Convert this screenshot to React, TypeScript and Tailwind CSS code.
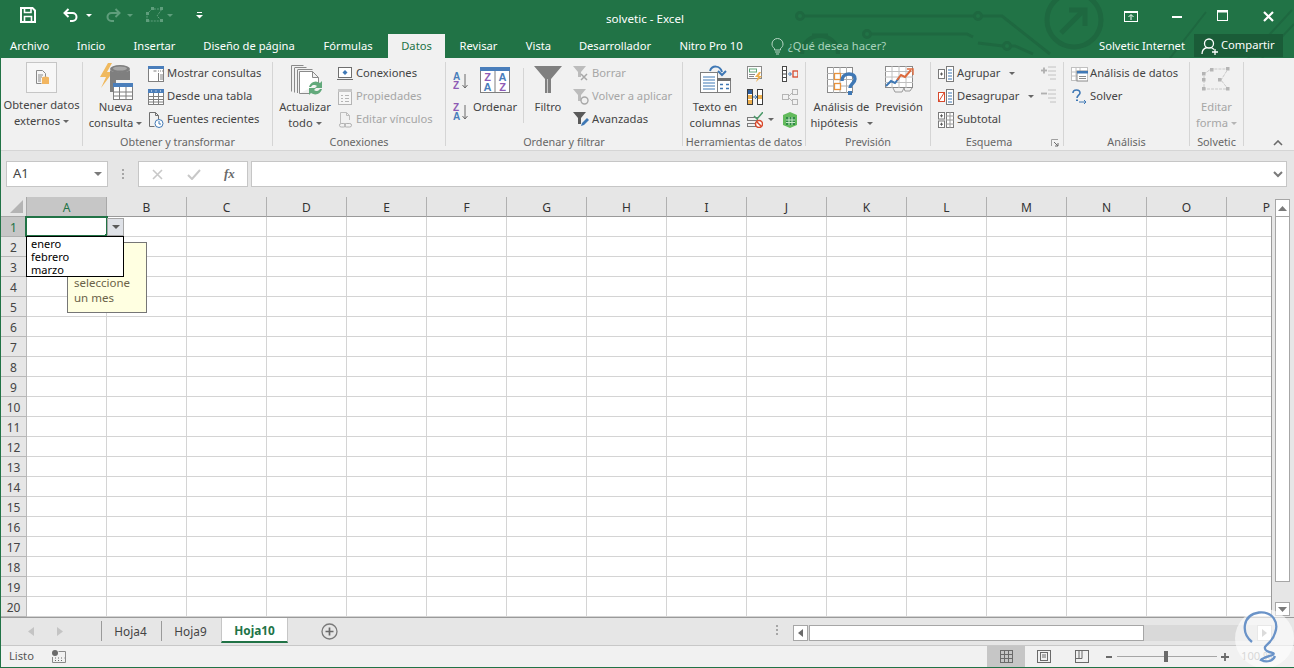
import React from "react";

const Caret = ({ c = "#666" }: { c?: string }) => (
  <svg width="6" height="3" viewBox="0 0 6 3" className="inline-block shrink-0"><path d="M0 0h6L3 3z" fill={c} /></svg>
);
const Caret8 = ({ c = "#666" }: { c?: string }) => (
  <svg width="8" height="4" viewBox="0 0 8 4" className="inline-block shrink-0"><path d="M0 0h8L4 4z" fill={c} /></svg>
);

const Grp = ({ w, label, children, extra }: { w: string; label?: string; children: React.ReactNode; extra?: React.ReactNode }) => (
  <div className={`relative flex flex-col h-[84px] shrink-0 border-r border-[#d5d5d5] ${w}`}>
    <div className="flex h-[72px]">{children}</div>
    {label && <div className="h-[12px] leading-[16px] text-[10.8px] text-center text-[#666] whitespace-nowrap">{label}</div>}
    {extra}
  </div>
);

const Big = ({ w, ml, icon, lines, ih = "h-[37px]", grey }: { w: string; ml?: string; icon: React.ReactNode; lines: React.ReactNode[]; ih?: string; grey?: boolean }) => (
  <div className={`flex flex-col items-center shrink-0 ${w} ${ml || ""} ${grey ? "text-[#a6a6a6]" : "text-[#444]"}`}>
    <div className={`flex items-center justify-center ${ih}`}>{icon}</div>
    {lines.map((l, i) => (
      <div key={i} className="leading-[16px] whitespace-nowrap flex items-center gap-[3px]">{l}</div>
    ))}
  </div>
);

const Small = ({ icon, text, grey, caret }: { icon: React.ReactNode; text: string; grey?: boolean; caret?: string }) => (
  <div className={`flex items-center h-[23px] gap-[3px] whitespace-nowrap ${grey ? "text-[#a6a6a6]" : "text-[#444]"}`}>
    <span className="w-[16px] h-[16px] flex items-center justify-center shrink-0">{icon}</span>
    <span>{text}</span>
    {caret && <span className={`flex ${caret}`}><Caret /></span>}
  </div>
);

const S = ({ children, w = 16, h = 16 }: { children: React.ReactNode; w?: number; h?: number }) => (
  <svg width={w} height={h} viewBox={`0 0 ${w} ${h}`} className="shrink-0" fill="none">{children}</svg>
);

const IDocDb = () => (
  <S>
    <path d="M2.5 1.5h6l3 3v4M2.5 1.5v13h5" stroke="#8a8a8a" />
    <path d="M4 6h5M4 8h4M4 10h3M4 12h3" stroke="#8a8a8a" />
    <ellipse cx="11.5" cy="9" rx="3.5" ry="1.5" fill="#f2b661" />
    <rect x="8" y="9" width="7" height="6" fill="#f2b661" />
  </S>
);
const INueva = () => (
  <S w={34} h={37}>
    <path d="M9 0L1 14h6L2 25 14 9H8l5-9z" fill="#f0b95e" />
    <ellipse cx="21" cy="6" rx="10" ry="4" fill="#7f7f7f" />
    <path d="M11 7v22h6V17h14V7c-2 3-18 3-20 0z" fill="#7f7f7f" />
    <ellipse cx="21" cy="5.5" rx="7" ry="2" fill="#a8a8a8" />
    <rect x="14.5" y="20.5" width="19" height="16" fill="#fff" stroke="#7f7f7f" />
    <rect x="14" y="20" width="20" height="4" fill="#4a7ebb" />
    <path d="M14 29h20M14 33h20M20.5 24v12M27 24v12" stroke="#7f7f7f" />
  </S>
);
const IMostrar = () => (
  <S>
    <rect x=".5" y=".5" width="15" height="15" fill="#fff" stroke="#7f7f7f" />
    <rect x="0" y="0" width="16" height="3" fill="#4a7ebb" />
    <path d="M5.5 5h3M10 5h1M12 5h1M14 5h1" stroke="#7f7f7f" />
    <path d="M10.5 7v8M12 9h3M12 11h3M12 13h3" stroke="#7f7f7f" />
  </S>
);
const ITabla = () => (
  <S>
    <rect x=".5" y=".5" width="15" height="15" fill="#fff" stroke="#7f7f7f" />
    <rect x="0" y="0" width="16" height="4" fill="#4a7ebb" />
    <path d="M3 2h1M7.5 2h1M12 2h1" stroke="#fff" />
    <path d="M0 7.5h16M0 10.5h16M0 13h16M5.5 4v12M10.5 4v12" stroke="#7f7f7f" />
  </S>
);
const IRecientes = () => (
  <S>
    <path d="M1.5 14.5v-14h6l3 3v4M1.5 14.5h5M7.5.5v3h3" stroke="#6f6f6f" />
    <circle cx="11" cy="11.5" r="4" fill="#fff" stroke="#3f78b5" />
    <path d="M11 9v3h2" stroke="#3f78b5" />
  </S>
);
const IConex = () => (
  <S>
    <rect x="1.5" y="1.5" width="13" height="10" fill="#fff" stroke="#6f6f6f" />
    <path d="M0 13.5h16" stroke="#6f6f6f" />
    <path d="M8 4l2.5 2.5L8 9 5.5 6.5z" fill="#3f78b5" />
  </S>
);
const IProp = () => (
  <S>
    <rect x="1.5" y=".5" width="13" height="15" fill="#f6f6f6" stroke="#b5b5b5" />
    <rect x="1" y="0" width="14" height="3" fill="#c8c8c8" />
    <path d="M4 6.5h2M8 6.5h4M4 9.5h2M8 9.5h4M4 12.5h2M8 12.5h4" stroke="#b5b5b5" />
  </S>
);
const IVinc = () => (
  <S>
    <path d="M3.5 11V.5h6l3 3V8M9.5.5v3h3" stroke="#bdbdbd" />
    <rect x="2.5" y="11.5" width="6" height="3.5" rx="1.7" stroke="#b0b0b0" />
    <rect x="7.5" y="11.5" width="7" height="3.5" rx="1.7" stroke="#b0b0b0" />
  </S>
);
const IActual = () => (
  <S w={32} h={32}>
    <path d="M.5 26.5V.5M3.5 27.5V3M6.5 28V5" stroke="#8a8a8a" />
    <path d="M.5.5h12M3.5 2.5h12M6.5 4.5h15" stroke="#8a8a8a" />
    <path d="M8.5 28.5V6.5h13l6 6v6M21.5 6.5v6h6M8.5 28.5h10" stroke="#8a8a8a" fill="#fff" />
    <path d="M18 22a7 7 0 0 1 11-4l2-2v7h-7l2-2a4 4 0 0 0-6 1z" fill="#62a97b" />
    <path d="M31 24a7 7 0 0 1-11 4l-2 2v-7h7l-2 2a4 4 0 0 0 6-1z" fill="#62a97b" />
  </S>
);
const Sort = ({ top, bottom, c1, c2 }: { top: string; bottom: string; c1: string; c2: string }) => (
  <svg width="16" height="19" viewBox="0 0 16 19" className="shrink-0">
    <text x="0" y="8.5" fontSize="10" fontWeight="700" fontFamily="Liberation Sans" fill={c1}>{top}</text>
    <text x="0" y="17.5" fontSize="10" fontWeight="700" fontFamily="Liberation Sans" fill={c2}>{bottom}</text>
    <path d="M12 3v14M9.5 14l2.5 3 2.5-3" stroke="#6a6a6a" fill="none" />
  </svg>
);
const IOrdenar = () => (
  <svg width="30" height="26" viewBox="0 0 30 26" className="shrink-0">
    <rect x=".5" y=".5" width="29" height="25" fill="#fff" stroke="#7f7f7f" />
    <rect width="30" height="4" fill="#4a7ebb" />
    <path d="M15 4v22" stroke="#7f7f7f" />
    <g fontSize="11" fontWeight="700" fontFamily="Liberation Sans" textAnchor="middle">
      <text x="7.5" y="14" fill="#8e5bb5">Z</text>
      <text x="7.5" y="24" fill="#4a7ebb">A</text>
      <text x="22.5" y="14" fill="#4a7ebb">A</text>
      <text x="22.5" y="24" fill="#8e5bb5">Z</text>
    </g>
  </svg>
);
const IFiltro = () => (
  <S w={28} h={27}>
    <path d="M0 0h28L17 13v14h-6V13z" fill="#808080" />
    <path d="M13.5 13v14" stroke="#c9c9c9" />
  </S>
);
const IBorrar = () => (
  <S>
    <path d="M0 0h13L8 6v5H5V6z" fill="#bcbcbc" />
    <path d="M8 8l6 6M14 8l-6 6" stroke="#a8a8a8" strokeWidth="1.5" />
  </S>
);
const IVolver = () => (
  <S>
    <path d="M0 0h13L8 6v6H5V6z" fill="#bcbcbc" />
    <circle cx="11.5" cy="11.5" r="3.5" stroke="#a8a8a8" strokeWidth="1.4" />
  </S>
);
const IAvanz = () => (
  <S>
    <path d="M0 0h13L8 6v6H5V6z" fill="#5a5a5a" />
    <path d="M8 14l1-3 5-5 2 2-5 5z" fill="#3f78b5" />
  </S>
);
const ITexto = () => (
  <S w={31} h={28}>
    <rect x=".5" y="7.5" width="17" height="20" fill="#fff" stroke="#7f7f7f" />
    <path d="M3 12h12M3 15h12M3 18h12M3 21h12M3 24h12" stroke="#3f78b5" />
    <rect x="17.5" y="13.5" width="13" height="14" fill="#fff" stroke="#7f7f7f" />
    <rect x="17" y="13" width="14" height="3" fill="#6f6f6f" />
    <path d="M20 19.5h3M26 19.5h3M20 23.5h3M26 23.5h3" stroke="#3f78b5" strokeWidth="1.5" />
    <path d="M10 6C12 0 20 0 22 7" stroke="#3f78b5" strokeWidth="2" />
    <path d="M18 6l4 4 4-4" stroke="#3f78b5" strokeWidth="2" />
  </S>
);
const IFlash = () => (
  <S>
    <rect x=".5" y=".5" width="14" height="12" fill="#fff" stroke="#8a8a8a" />
    <rect x="2.5" y="3" width="7" height="3" stroke="#62a97b" />
    <path d="M2 8.5h6M2 10.5h5" stroke="#8a8a8a" />
    <path d="M12 6l-4 5h3l-2 5 6-6h-3l2-4z" fill="#eeb04f" />
  </S>
);
const IDup = () => (
  <S>
    <rect x=".5" y=".5" width="5" height="15" fill="#fff" stroke="#3e3e3e" />
    <rect x="10.5" y=".5" width="5" height="15" fill="#fff" stroke="#3e3e3e" />
    <rect x="1" y="1" width="4" height="4" fill="#2f5f9e" />
    <rect x="1" y="6" width="4" height="4" fill="#eeb04f" />
    <rect x="1" y="11" width="4" height="4" fill="#eeb04f" />
    <rect x="11" y="6" width="4" height="4" fill="#eeb04f" />
    <path d="M6 8h4M8 6l2 2-2 2" stroke="#3f78b5" />
  </S>
);
const IValid = () => (
  <S>
    <rect x=".5" y="5.5" width="10" height="3" stroke="#7a7a7a" />
    <rect x=".5" y="11.5" width="8" height="3" stroke="#7a7a7a" />
    <path d="M7 4l3 3 6-7" stroke="#4c9a6a" strokeWidth="1.5" />
    <circle cx="12" cy="12" r="3.5" fill="#fff" stroke="#d8492c" strokeWidth="1.5" />
    <path d="M9.5 9.5l5 5" stroke="#d8492c" strokeWidth="1.5" />
  </S>
);
const IConsol = () => (
  <S>
    <rect x=".5" y=".5" width="4" height="15" fill="#fff" stroke="#4a4a4a" />
    <path d="M1 4.5h3M1 8h3M1 11.5h3" stroke="#4a4a4a" />
    <path d="M6 8h3M7.5 6l2 2-2 2" stroke="#3f78b5" />
    <rect x="11" y="5" width="5" height="6" stroke="#d8492c" strokeWidth="1.3" />
  </S>
);
const IRel = () => (
  <S>
    <rect x=".5" y="5.5" width="6" height="5" stroke="#b5b5b5" />
    <rect x="10.5" y=".5" width="5" height="5" stroke="#b5b5b5" />
    <rect x="10.5" y="10.5" width="5" height="5" stroke="#b5b5b5" />
    <path d="M7 7l3-3M7 9l3 3" stroke="#b5b5b5" />
  </S>
);
const IModel = () => (
  <S>
    <path d="M1 3l7-3 7 3v10l-7 3-7-3z" fill="#63bb5c" />
    <path d="M4 5h9v8H4z" fill="#2e8b45" />
    <path d="M4 8h9M4 10.500h9M7 5v8M10 5v8" stroke="#c9e9c9" />
  </S>
);
const IHipo = () => (
  <S w={30} h={30}>
    <rect x=".5" y=".5" width="25" height="25" fill="#fff" stroke="#8a8a8a" />
    <path d="M0 6.5h26M0 12.5h26M0 19h26M6.5 0v26M13 0v26M19.5 0v26" stroke="#b0b0b0" />
    <rect x="7.5" y="6.5" width="6" height="6" fill="#fff" stroke="#e8923a" strokeWidth="1.3" />
    <rect x="7.5" y="16.5" width="6" height="6" fill="#fff" stroke="#e8923a" strokeWidth="1.3" />
    <path d="M15 14c0-5 4-7 7-7 4 0 6 2 6 5 0 4-5 5-5 9" stroke="#3f78b5" strokeWidth="3.4" fill="none" />
    <rect x="21" y="24" width="4" height="4" fill="#3f78b5" />
  </S>
);
const IPrev = () => (
  <S w={29} h={27}>
    <rect x=".5" y=".5" width="27" height="21" fill="#fff" stroke="#8a8a8a" />
    <path d="M0 5.5h28M0 11h28M0 16.5h28M7 0v22M14 0v22M21 0v22" stroke="#c0c0c0" />
    <path d="M1 20l5-5 4 2 4-5" stroke="#3f78b5" strokeWidth="2" />
    <path d="M12 14l4-5 4 2 6-7" stroke="#dd6a3c" strokeWidth="2" />
    <path d="M22 3h6v6" stroke="#dd6a3c" strokeWidth="1.4" />
    <path d="M8 22l2 4h7l2-4M19 22l1 3h5l2-3" stroke="#9a9a9a" />
  </S>
);
const IAgr = ({ red }: { red?: boolean }) => (
  <S>
    <rect x=".5" y="3.5" width="6" height="9" fill="#fff" stroke={red ? "#d8492c" : "#7a7a7a"} />
    {red ? <path d="M1 12l5-8" stroke="#d8492c" /> : <path d="M2 8h3M3.5 6.5v3" stroke="#5a5a5a" />}
    <rect x="8.5" y=".5" width="7" height="15" fill="#fff" stroke="#7a7a7a" />
    <path d="M10 4h4M10 7h4M10 10h4M10 13h4" stroke="#3f78b5" />
  </S>
);
const ISub = () => (
  <S>
    <rect x=".5" y=".5" width="6" height="6.5" fill="#fff" stroke="#7a7a7a" />
    <rect x=".5" y="9" width="6" height="6.5" fill="#fff" stroke="#7a7a7a" />
    <path d="M2 3.8h3M3.5 2.3v3M2 12.2h3M3.5 10.7v3" stroke="#5a5a5a" />
    <rect x="8.5" y=".5" width="7" height="15" fill="#fff" stroke="#7a7a7a" />
    <path d="M8 4h8M8 8h8M8 12h8M12 0v16" stroke="#9a9a9a" />
  </S>
);
const IPlusL = ({ minus }: { minus?: boolean }) => (
  <S w={15} h={16}>
    <path d="M7 1h8M7 5h8M7 9h8M9 13h6" stroke="#c2c2c2" />
    <path d="M0 4.5h6" stroke="#b0b0b0" strokeWidth="1.8" />
    {!minus && <path d="M3 1.5v6" stroke="#b0b0b0" strokeWidth="1.8" />}
  </S>
);
const IDatos = () => (
  <S w={17} h={16}>
    <rect x=".5" y="1.5" width="16" height="13" fill="#fff" stroke="#c0c0c0" />
    <path d="M0 6h8M0 10h8M5 1v14M9 1v4" stroke="#c0c0c0" />
    <rect x="6" y="5" width="11" height="10" fill="#fff" stroke="#8a8a8a" />
    <rect x="6" y="5" width="11" height="2.5" fill="#3f78b5" />
    <path d="M8 10.5h7M8 12.5h7" stroke="#8a8a8a" />
  </S>
);
const ISolver = () => (
  <S>
    <path d="M2 4c0-2 1.5-3 3.5-3S9 2 9 4c0 2-3 2.5-3 5" stroke="#3f78b5" strokeWidth="1.6" />
    <path d="M5 10.5h2V12H5z" fill="#3f78b5" />
    <path d="M8 13h7M13 11l2 2-2 2" stroke="#3f78b5" />
  </S>
);
const IForma = () => (
  <S w={31} h={24}>
    <path d="M3 7L10 2h17l-7 11 7 9H3z" stroke="#c9c9c9" strokeDasharray="3 1" />
    {[[1, 5], [9, 1], [25, 0], [17, 11], [25, 20], [1, 20], [1, 11]].map(([x, y], i) => (
      <rect key={i} x={x} y={y} width="3.5" height="3.5" fill="#b5b5b5" />
    ))}
  </S>
);

const TITLE_DECOR = (
  <svg className="absolute left-0 top-0 pointer-events-none" width="1294" height="58" viewBox="0 0 1294 58" fill="none">
    <g stroke="#1e6840" strokeWidth="3">
      <path d="M804 16H975M982 16h20L1050 54" />
      <circle cx="800" cy="16" r="3.5" />
      <circle cx="978" cy="16" r="3.5" />
      <path d="M802 54c0-24 36-24 36 0" strokeWidth="4" />
      <path d="M812 35h16" strokeWidth="3" />
      <path d="M871 34h96l6 3" />
      <circle cx="867" cy="34" r="3.5" />
      <path d="M978 43l25 3M1011 46h4l18 8" />
      <circle cx="1007" cy="46" r="3.5" />
      <circle cx="1074" cy="20" r="27" strokeWidth="5" />
      <path d="M1061 33l23-23M1069 10h16v16" strokeWidth="5" />
      <path d="M1170 58l36-46M1248 58l44-48M1262 58l32-34" strokeWidth="2" />
    </g>
  </svg>
);

const COLS = ["A", "B", "C", "D", "E", "F", "G", "H", "I", "J", "K", "L", "M", "N", "O", "P"];
const ROWS = Array.from({ length: 20 }, (_, i) => i + 1);

export default function App() {
  return (
    <div className="relative w-[1294px] h-[668px] overflow-hidden flex flex-col bg-[#f1f1f1] border-l border-b border-[#217346] font-['Noto_Sans',sans-serif] text-[11.2px] text-[#444]">
      {/* Title + tabs */}
      <div className="relative bg-[#217346] h-[58px] -ml-px text-white shrink-0">
        {TITLE_DECOR}
        <div className="relative flex items-center h-[34px] pb-[4px]">
          <span className="ml-[20px] flex">
            <S>
              <path d="M1 1h11.5L15 3.5V15H1z" stroke="#fff" strokeWidth="2" />
              <path d="M4.5 1v4.5h6.5V1" stroke="#fff" strokeWidth="1.6" />
              <path d="M4.5 15V9.5h7V15" stroke="#fff" strokeWidth="1.6" />
            </S>
          </span>
          <span className="ml-[27px] flex">
            <S>
              <path d="M5.5 2L1.5 6l4 4" stroke="#fff" strokeWidth="2" />
              <path d="M2 6h7.5a4 4 0 0 1 0 8H7" stroke="#fff" strokeWidth="2" />
            </S>
          </span>
          <span className="ml-[7px] flex"><Caret c="#fff" /></span>
          <span className="ml-[13px] flex">
            <S>
              <path d="M10.5 2l4 4-4 4" stroke="#5f9e7c" strokeWidth="2" />
              <path d="M14 6H6.5a4 4 0 0 0 0 8H9" stroke="#5f9e7c" strokeWidth="2" />
            </S>
          </span>
          <span className="ml-[6px] flex"><Caret c="#5f9e7c" /></span>
          <span className="ml-[13px] flex">
            <S w={18} h={16}>
              <path d="M1 7L6 2h10L11 9l5 5H1z" stroke="#5f9e7c" strokeDasharray="2 1" />
              <rect x="0" y="5" width="3" height="3" fill="#5f9e7c" />
              <rect x="5" y="0" width="3" height="3" fill="#5f9e7c" />
              <rect x="14" y="0" width="3" height="3" fill="#5f9e7c" />
              <rect x="14" y="12" width="3" height="3" fill="#5f9e7c" />
              <rect x="0" y="12" width="3" height="3" fill="#5f9e7c" />
            </S>
          </span>
          <span className="ml-[3px] flex"><Caret c="#5f9e7c" /></span>
          <span className="ml-[23px] flex">
            <svg width="7" height="7" viewBox="0 0 7 7"><path d="M1 .5h5" stroke="#fff" /><path d="M0 3h7L3.5 6.5z" fill="#fff" /></svg>
          </span>
          <span className="ml-[397px] mt-[8px] w-[90px] text-center text-[11.6px] whitespace-nowrap">solvetic - Excel</span>
          <span className="ml-[434px] mt-[2px] flex">
            <S w={14} h={12}>
              <rect x=".5" y="1.5" width="13" height="10" stroke="#fff" />
              <path d="M0 2.5h14" stroke="#fff" />
              <path d="M7 10V5M4.500 7L7 4.500 9.500 7" stroke="#fff" />
            </S>
          </span>
          <span className="ml-[34px] flex mt-[4px]"><span className="w-[10px] h-[2px] bg-white" /></span>
          <span className="ml-[35px] mt-[2px] flex">
            <S w={12} h={12}><rect x=".5" y=".5" width="10" height="10" stroke="#fff" /><path d="M0 1.5h11" stroke="#fff" strokeWidth="2" /></S>
          </span>
          <span className="ml-[34px] mt-[2px] flex">
            <S w={11} h={11}><path d="M1 1l9 9M10 1l-9 9" stroke="#fff" strokeWidth="2.2" /></S>
          </span>
        </div>
        <div className="relative flex items-center h-[24px]">
          <div className="w-[62px] pl-[10px] mt-[1px]">Archivo</div>
          <div className="w-[58px] text-center">Inicio</div>
          <div className="w-[69px] text-center">Insertar</div>
          <div className="w-[120px] text-center whitespace-nowrap">Diseño de página</div>
          <div className="w-[78px] text-center mr-[1px]">Fórmulas</div>
          <div className="w-[57px] h-[24px] leading-[24px] bg-[#f1f1f1] text-[#217346] text-center">Datos</div>
          <div className="w-[67px] text-center">Revisar</div>
          <div className="w-[53px] text-center">Vista</div>
          <div className="w-[100px] text-center">Desarrollador</div>
          <div className="w-[92px] text-center whitespace-nowrap">Nitro Pro 10</div>
          <span className="ml-[14px] flex">
            <S w={13} h={17}>
              <path d="M3.500 10.500C2 9.500 1 8 1 6a5.500 5.500 0 0 1 11 0c0 2-1 3.500-2.500 4.500V12h-6z" stroke="#b7d6c5" />
              <path d="M4 14h5M5 16h3" stroke="#b7d6c5" />
            </S>
          </span>
          <span className="ml-[4px] text-[#a9d3bd] whitespace-nowrap w-[311px]">¿Qué desea hacer?</span>
          <span className="whitespace-nowrap w-[95px]">Solvetic Internet</span>
          <div className="w-[89px] h-[23px] self-start bg-[#1a5c38] flex items-center pl-[7px] gap-[2px]">
            <S w={18} h={18}>
              <circle cx="8" cy="6.500" r="4.500" stroke="#fff" strokeWidth="1.3" />
              <path d="M1 17c0-4 3-6 5-6.500M10 10.500c1 .3 2 1 3 2" stroke="#fff" strokeWidth="1.3" />
              <path d="M14 12v6M11 15h6" stroke="#fff" strokeWidth="1.3" />
            </S>
            <span>Compartir</span>
          </div>
        </div>
      </div>

      {/* Ribbon */}
      <div className="flex h-[93px] pt-[4px] border-b border-[#d5d5d5] shrink-0">
        <Grp w="w-[82px]">
          <Big
            w="w-[81px]"
            ih="h-[35px]"
            icon={<span className="w-[31px] h-[31px] -mt-[5px] bg-[#f7f7f7] border border-[#c6c6c6] flex items-center justify-center"><IDocDb /></span>}
            lines={["Obtener datos", <>externos <Caret /></>]}
          />
        </Grp>
        <Grp w="w-[190px]" label="Obtener y transformar">
          <Big w="w-[51px]" ml="ml-[7px]" icon={<span className="mt-[2px] flex"><INueva /></span>} lines={["Nueva", <>consulta <Caret /></>]} />
          <div className="ml-[7px]">
            <Small icon={<IMostrar />} text="Mostrar consultas" />
            <Small icon={<ITabla />} text="Desde una tabla" />
            <Small icon={<IRecientes />} text="Fuentes recientes" />
          </div>
        </Grp>
        <Grp w="w-[173px]" label="Conexiones">
          <Big w="w-[56px]" ml="ml-[4px]" icon={<span className="ml-[3px] flex"><IActual /></span>} lines={["Actualizar", <>todo <Caret /></>]} />
          <div className="ml-[4px]">
            <Small icon={<IConex />} text="Conexiones" />
            <Small grey icon={<IProp />} text="Propiedades" />
            <Small grey icon={<IVinc />} text="Editar vínculos" />
          </div>
        </Grp>
        <Grp w="w-[237px]" label="Ordenar y filtrar">
          <div className="ml-[7px] w-[16px] pt-[9px] flex flex-col gap-[12px] shrink-0">
            <Sort top="A" bottom="Z" c1="#4a7ebb" c2="#8e5bb5" />
            <Sort top="Z" bottom="A" c1="#8e5bb5" c2="#4a7ebb" />
          </div>
          <Big w="w-[44px]" ml="ml-[4px]" icon={<span className="-mt-[2px] flex"><IOrdenar /></span>} lines={["Ordenar"]} />
          <div className="ml-[6px] mt-[6px] w-px h-[55px] bg-[#d5d5d5] shrink-0" />
          <Big w="w-[28px]" ml="ml-[10px]" icon={<span className="-mt-[2px] flex"><IFiltro /></span>} lines={["Filtro"]} />
          <div className="ml-[11px]">
            <Small grey icon={<IBorrar />} text="Borrar" />
            <Small grey icon={<IVolver />} text="Volver a aplicar" />
            <Small icon={<IAvanz />} text="Avanzadas" />
          </div>
        </Grp>
        <Grp w="w-[123px]" label="Herramientas de datos">
          <Big w="w-[60px]" ml="ml-[2px]" icon={<span className="-mt-[4px] flex"><ITexto /></span>} lines={["Texto en", <>columnas</>]} />
          <div className="ml-[2px] w-[35px] shrink-0">
            <div className="h-[23px] flex items-center"><IFlash /></div>
            <div className="h-[23px] flex items-center"><IDup /></div>
            <div className="h-[23px] flex items-center gap-[5px]"><IValid /><Caret /></div>
          </div>
          <div>
            <div className="h-[23px] flex items-center"><IConsol /></div>
            <div className="h-[23px] flex items-center"><IRel /></div>
            <div className="h-[23px] flex items-center"><IModel /></div>
          </div>
        </Grp>
        <Grp w="w-[125px]" label="Previsión">
          <Big w="w-[57px]" ml="ml-[7px]" icon={<span className="mt-[2px] flex"><IHipo /></span>} lines={["Análisis de", <>hipótesis &nbsp;<Caret /></>]} />
          <Big w="w-[48px]" ml="ml-[5px]" icon={<span className="-mt-[2px] flex"><IPrev /></span>} lines={["Previsión"]} />
        </Grp>
        <Grp
          w="w-[133px]"
          extra={
            <>
              <div className="h-[12px] leading-[16px] text-[10.8px] text-[#666] text-center pr-[16px]">Esquema</div>
              <span className="absolute left-[120px] top-[77px] flex">
                <svg width="8" height="8" viewBox="0 0 8 8" fill="none"><path d="M.5 7V.5H7" stroke="#a0a0a0" /><path d="M3 3l4 4M7 4v3H4" stroke="#6a6a6a" /></svg>
              </span>
            </>
          }
        >
          <div className="ml-[7px] w-[103px] shrink-0">
            <Small icon={<IAgr />} text="Agrupar" caret="ml-[6px]" />
            <Small icon={<IAgr red />} text="Desagrupar" caret="ml-[6px]" />
            <Small icon={<ISub />} text="Subtotal" />
          </div>
          <div>
            <div className="h-[23px] flex items-center"><IPlusL /></div>
            <div className="h-[23px] flex items-center"><IPlusL minus /></div>
          </div>
        </Grp>
        <Grp w="w-[126px]" label="Análisis">
          <div className="ml-[7px]">
            <Small icon={<IDatos />} text="Análisis de datos" />
            <Small icon={<ISolver />} text="Solver" />
          </div>
        </Grp>
        <Grp w="w-[54px]" label="Solvetic">
          <Big w="w-[53px]" grey icon={<span className="-mt-[4px] flex"><IForma /></span>} lines={["Editar", <>forma <Caret c="#b5b5b5" /></>]} />
        </Grp>
        <div className="flex-1 flex justify-end pr-[11px] pt-[78px]">
          <svg width="10" height="6" viewBox="0 0 10 6" fill="none"><path d="M1 5l4-4 4 4" stroke="#6a6a6a" strokeWidth="1.6" /></svg>
        </div>
      </div>

      {/* Formula bar */}
      <div className="flex h-[46px] pt-[10px] bg-[#e6e6e6] shrink-0">
        <div className="ml-[5px] w-[102px] h-[26px] bg-white border border-[#c6c6c6] flex items-center justify-between pl-[6px] pr-[5px] text-[13px] text-[#444]">
          <span>A1</span>
          <Caret8 c="#7a7a7a" />
        </div>
        <div className="w-[30px] h-[26px] flex flex-col items-center justify-center gap-[2px]">
          <span className="w-[2px] h-[2px] bg-[#a6a6a6]" />
          <span className="w-[2px] h-[2px] bg-[#a6a6a6]" />
          <span className="w-[2px] h-[2px] bg-[#a6a6a6]" />
        </div>
        <div className="w-[110px] h-[26px] bg-white border border-[#c6c6c6] flex items-center pl-[13px]">
          <S w={11} h={11}><path d="M1 1l9 9M10 1l-9 9" stroke="#c8c8c8" strokeWidth="1.6" /></S>
          <span className="ml-[24px] flex"><S w={14} h={11}><path d="M1 6l4 4 8-9" stroke="#c8c8c8" strokeWidth="2" /></S></span>
          <span className="ml-[23px] italic font-['Liberation_Serif',serif] font-bold text-[13px] text-[#6a6a6a]">fx</span>
        </div>
        <div className="ml-[3px] w-[1036px] h-[26px] bg-white border border-[#c6c6c6] flex items-center justify-end pr-[3px]">
          <svg width="10" height="7" viewBox="0 0 10 7" fill="none"><path d="M1 1l4 4 4-4" stroke="#7a7a7a" strokeWidth="2" /></svg>
        </div>
      </div>

      {/* Grid */}
      <div className="flex h-[420px] shrink-0 bg-[#e6e6e6]">
        <div className="relative w-[1271px] shrink-0">
          <div className="flex h-[20px] overflow-hidden">
            <div className="w-[26px] shrink-0 flex items-end justify-end pb-[3px] pr-[3px] border-b border-r border-[#a8a8a8]">
              <svg width="13" height="13" viewBox="0 0 13 13"><path d="M13 0v13H0z" fill="#b4b4b4" /></svg>
            </div>
            {COLS.map((c) => (
              <div
                key={c}
                className={
                  c === "A"
                    ? "w-[80px] shrink-0 text-center text-[12px] leading-[21px] text-[#217346] bg-[#c6c6c6] border-r border-b border-r-[#a8a8a8] border-b-[#9a9a9a]"
                    : "w-[80px] shrink-0 text-center text-[12px] leading-[21px] text-[#333] border-r border-b border-r-[#b0b0b0] border-b-[#9a9a9a]"
                }
              >
                {c}
              </div>
            ))}
          </div>
          {ROWS.map((r) => (
            <div key={r} className="flex h-[20px] overflow-hidden border-r border-[#9a9a9a]">
              <div
                className={
                  r === 1
                    ? "w-[26px] shrink-0 text-center text-[12px] leading-[21px] text-[#217346] bg-[#c6c6c6] border-r border-b border-[#b0b0b0]"
                    : "w-[26px] shrink-0 text-center text-[12px] leading-[21px] text-[#444] border-r border-b border-[#b8b8b8]"
                }
              >
                {r}
              </div>
              {COLS.map((c) => (
                <div key={c} className="w-[80px] shrink-0 bg-white border-r border-b border-[#d4d4d4]" />
              ))}
            </div>
          ))}
          {/* Selection, validation list & tooltip */}
          <div className="absolute left-[24px] top-[19px] w-[83px] h-[21px] border-2 border-[#217346]" />
          <div className="absolute left-[104px] top-[37px] w-[4px] h-[4px] bg-[#217346]" />
          <div className="absolute left-[106px] top-[21px] w-[17px] h-[18px] bg-[#dfe2e8] border border-[#a6a6a6] flex items-center justify-center">
            <Caret8 c="#5a5a5a" />
          </div>
          <div className="absolute left-[66px] top-[45px] w-[80px] h-[71px] bg-[#ffffe1] border border-[#767676] pl-[6px] pt-[32px] text-[11.5px] leading-[15px] text-[#6b6248]">
            seleccione<br />un mes
          </div>
          <div className="absolute left-[25px] top-[39px] w-[98px] h-[41px] bg-white border border-black pl-[4px] text-[11px] leading-[13px] text-black">
            <div>enero</div>
            <div>febrero</div>
            <div>marzo</div>
          </div>
        </div>
        <div className="flex-1 pl-[3px] pt-[2px]">
          <div className="w-[15px] h-[18px] bg-white border border-[#a6a6a6] flex items-center justify-center">
            <svg width="9" height="5" viewBox="0 0 9 5"><path d="M0 5h9L4.500 0z" fill="#7a7a7a" /></svg>
          </div>
          <div className="w-[15px] h-[366px] bg-white border border-[#a6a6a6] -mt-px" />
          <div className="w-[15px] h-[14px] mt-[20px] bg-white border border-[#a6a6a6] flex items-center justify-center">
            <svg width="9" height="5" viewBox="0 0 9 5"><path d="M0 0h9L4.500 5z" fill="#7a7a7a" /></svg>
          </div>
        </div>
      </div>

      {/* Sheet tabs */}
      <div className="flex h-[28px] shrink-0 bg-[#e6e6e6] border-t border-[#9a9a9a] items-start text-[11.8px]">
        <div className="flex items-center h-[27px] w-[100px] pl-[27px] shrink-0">
          <svg width="6" height="9" viewBox="0 0 6 9"><path d="M6 0v9L0 4.500z" fill="#c4c4c4" /></svg>
          <span className="ml-[23px] flex"><svg width="6" height="9" viewBox="0 0 6 9"><path d="M0 0v9l6-4.500z" fill="#c4c4c4" /></svg></span>
        </div>
        <div className="w-[60px] h-[20px] mt-[3px] border-l border-[#9a9a9a] text-center pr-[2px] leading-[20px] shrink-0 text-[#444]">Hoja4</div>
        <div className="w-[60px] h-[20px] mt-[3px] border-l border-[#9a9a9a] text-center pr-[2px] leading-[20px] shrink-0 text-[#444]">Hoja9</div>
        <div className="w-[67px] h-[25px] bg-white border-b-2 border-x border-x-[#c6c6c6] border-b-[#217346] text-center leading-[24px] font-bold text-[#217346] shrink-0">Hoja10</div>
        <span className="ml-[33px] mt-[5px] flex">
          <S w={17} h={17}>
            <circle cx="8.500" cy="8.500" r="7.500" stroke="#7a7a7a" strokeWidth="1.300" />
            <path d="M4.500 8.500h8M8.500 4.500v8" stroke="#6a6a6a" strokeWidth="1.700" />
          </S>
        </span>
        <div className="ml-[438px] mt-[7px] flex flex-col gap-[2px] shrink-0">
          <span className="w-[2px] h-[2px] bg-[#a6a6a6]" />
          <span className="w-[2px] h-[2px] bg-[#a6a6a6]" />
          <span className="w-[2px] h-[2px] bg-[#a6a6a6]" />
        </div>
        <div className="ml-[15px] mt-[7px] flex w-[482px] h-[16px] bg-[#d9d9d9] shrink-0">
          <div className="w-[15px] h-[16px] bg-white border border-[#a6a6a6] flex items-center justify-center">
            <svg width="5" height="8" viewBox="0 0 5 8"><path d="M5 0v8L0 4z" fill="#6a6a6a" /></svg>
          </div>
          <div className="w-[335px] h-[16px] bg-white border border-[#a6a6a6] ml-px" />
          <div className="w-[15px] h-[16px] bg-white border border-[#c6c6c6] ml-[113px] flex items-center justify-center">
            <svg width="5" height="8" viewBox="0 0 5 8"><path d="M0 0v8l5-4z" fill="#a6a6a6" /></svg>
          </div>
        </div>
      </div>

      {/* Status bar */}
      <div className="flex flex-1 items-center border-t border-[#c8c8c8] bg-[#f1f1f1] text-[#555]">
        <span className="ml-[8px] w-[43px]">Listo</span>
        <S w={14} h={13}>
          <circle cx="3" cy="3" r="3" fill="#6a6a6a" />
          <path d="M6.500 1.500H13.500V12.500H.5V7" stroke="#8a8a8a" />
          <path d="M3 8h1M6 8h1M9 8h1M12 8h.5M3 10.500h1M6 10.500h1M9 10.500h1" stroke="#6a6a6a" />
        </S>
        <div className="ml-[921px] w-[38px] h-[21px] bg-[#c6c6c6] flex items-center justify-center">
          <S w={13} h={13}>
            <rect x=".5" y=".5" width="12" height="12" stroke="#6a6a6a" />
            <path d="M4.500 0v13M8.500 0v13M0 4.500h13M0 8.500h13" stroke="#6a6a6a" />
          </S>
        </div>
        <span className="ml-[12px] flex">
          <S w={14} h={13}>
            <rect x=".5" y=".5" width="13" height="12" stroke="#6a6a6a" />
            <rect x="3.500" y="2.500" width="7" height="8" stroke="#6a6a6a" />
            <path d="M5 5h4M5 7h4" stroke="#6a6a6a" />
          </S>
        </span>
        <span className="ml-[24px] flex">
          <S w={14} h={13}>
            <rect x=".5" y=".5" width="13" height="12" stroke="#6a6a6a" />
            <path d="M.5 8.500h6.500V.5" stroke="#6a6a6a" />
            <path d="M4 0v8" stroke="#6a6a6a" />
          </S>
        </span>
        <span className="ml-[17px] w-[6px] h-[2px] bg-[#6a6a6a]" />
        <div className="relative ml-[5px] w-[100px] h-px bg-[#a6a6a6]">
          <span className="absolute left-[47px] -top-[5px] w-[4px] h-[11px] bg-[#6a6a6a]" />
        </div>
        <span className="ml-[4px] flex">
          <S w={8} h={8}><path d="M0 4h8M4 0v8" stroke="#6a6a6a" strokeWidth="1.800" /></S>
        </span>
        <span className="ml-[12px] text-[#9a9a9a] whitespace-nowrap">100 %</span>
      </div>

      {/* Watermark */}
      <div className="absolute left-[1234px] top-[609px] w-[59px] h-[59px] rounded-full bg-white/60">
        <svg width="59" height="59" viewBox="0 0 59 59" fill="none">
          <path d="M17 33C6 24 7 6 24 3.500C38 2 44 14 40 24C38 32 33 34 30 38C29 42 34 43 38 44C42 46 28 48 26 51C32 54 38 52 40 47" stroke="#6a93c8" strokeWidth="2.300" />
        </svg>
      </div>
    </div>
  );
}
